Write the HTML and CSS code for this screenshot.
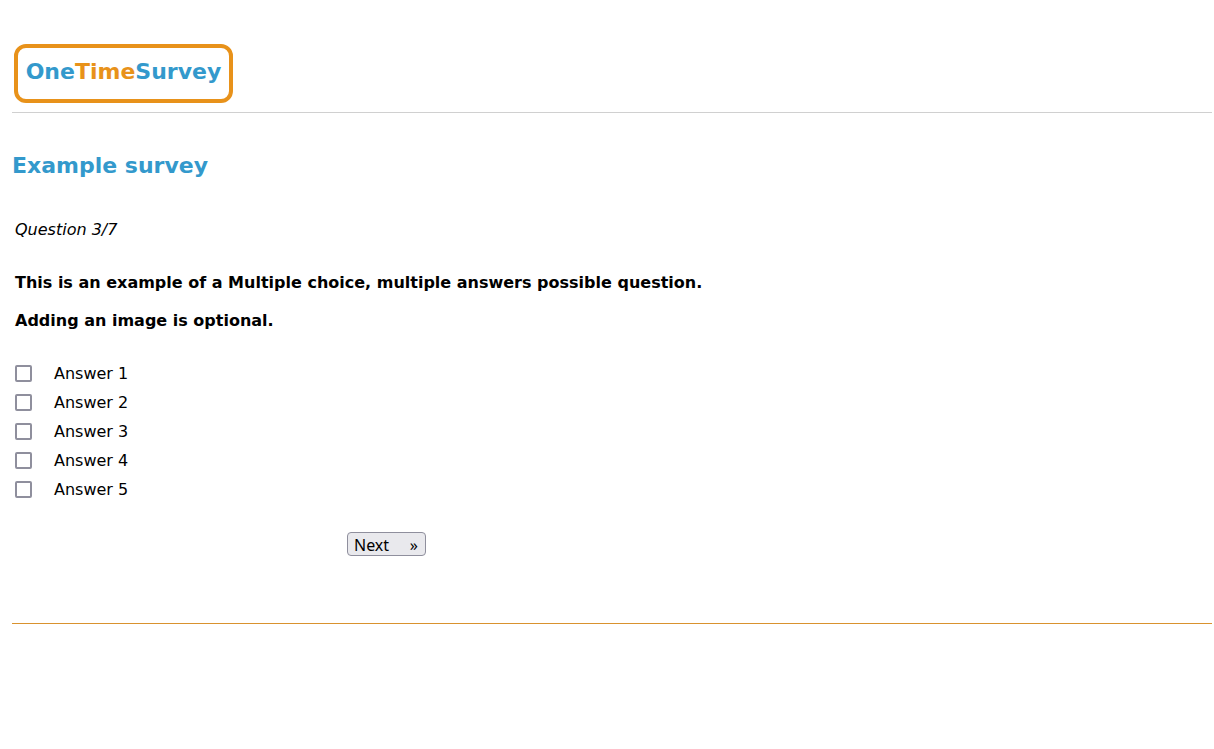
FILE: index.html
```
<!DOCTYPE html>
<html lang="en">
<head>
  <meta charset="UTF-8" />
  <meta name="viewport" content="width=device-width, initial-scale=1.0"/>
  <title>Example survey</title>
  <link rel="stylesheet" href="styles.css">
</head>
<body>
  <header class="header">
    <div class="logo">One<span class="accent">Time</span>Survey</div>
  </header>

  <main>
    <h1>Example survey</h1>

    <form class="survey">
      <p class="progress">Question 3/7</p>

      <div class="question">
        <p>This is an example of a Multiple choice, multiple answers possible question.</p>
        <p>Adding an image is optional.</p>
      </div>

      <div class="answers">
        <label class="answer"><input type="checkbox" name="answer" value="1">Answer 1</label>
        <label class="answer"><input type="checkbox" name="answer" value="2">Answer 2</label>
        <label class="answer"><input type="checkbox" name="answer" value="3">Answer 3</label>
        <label class="answer"><input type="checkbox" name="answer" value="4">Answer 4</label>
        <label class="answer"><input type="checkbox" name="answer" value="5">Answer 5</label>
      </div>

      <div class="actions">
        <button type="button" class="next"><span>Next</span><span>»</span></button>
      </div>
    </form>
  </main>

  <footer class="footer"></footer>
</body>
</html>
```

FILE: styles.css
```
body {
  margin: 0;
  padding: 44px 2px 0 12px;
  background: #fff;
  color: #000;
  font-family: Verdana, "DejaVu Sans", sans-serif;
  font-size: 16px;
  line-height: 20px;
}

.header {
  padding: 0 2px 9px;
  border-bottom: 1px solid #d0d0d0;
}

.logo {
  box-sizing: border-box;
  width: 219px;
  height: 59px;
  border: 4px solid #e8921a;
  border-radius: 12px;
  color: #3399cc;
  font-size: 22px;
  font-weight: bold;
  line-height: 48px;
  text-align: center;
}

.accent {
  color: #e8921a;
}

h1 {
  margin: 41px 0 42px;
  color: #3399cc;
  font-size: 22px;
  line-height: 24px;
}

.survey {
  padding-left: 3px;
}

.progress {
  margin: 0;
  font-style: italic;
}

.question {
  margin: 33px 0 28px;
  font-weight: bold;
}

.question p {
  margin: 0 0 18px;
}

.question p:last-child {
  margin-bottom: 0;
}

.answer {
  display: flex;
  align-items: center;
  gap: 22px;
  width: max-content;
  height: 29px;
}

.answer input {
  appearance: none;
  box-sizing: border-box;
  width: 17px;
  height: 17px;
  margin: 0;
  border: 2px solid #8f8f9d;
  border-radius: 2px;
  background: #fff;
}

.answer input:checked {
  background: #3399cc;
}

.actions {
  padding: 28px 0 67px 332px;
}

.next {
  display: flex;
  justify-content: space-between;
  align-items: center;
  width: 79px;
  height: 24px;
  padding: 1px 7px 0 6px;
  border: 1px solid #8f8f9d;
  border-radius: 4px;
  background: #e9e9ed;
  color: #000;
  font: 16px "Noto Sans", "Open Sans", sans-serif;
}

.footer {
  border-top: 1px solid #d9922e;
}
```
